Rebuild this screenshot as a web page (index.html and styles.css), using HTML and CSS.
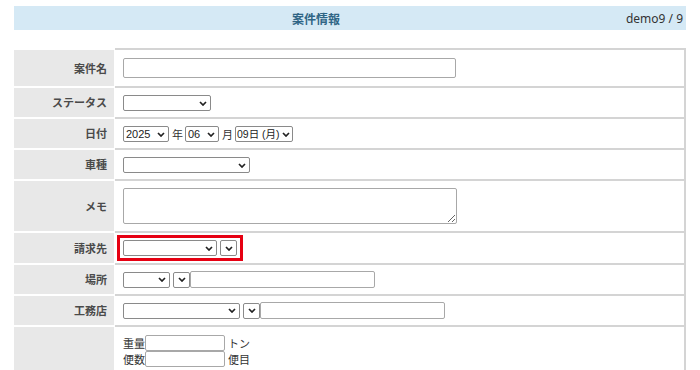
FILE: index.html
```html
<!DOCTYPE html>
<html>
<head>
  <title>案件情報</title>
  <link rel="stylesheet" href="styles.css">
</head>

<body>
  <div class="page">
    <div class="title-bar">
      <p class="title">案件情報</p>
      <p class="user">demo9 / 9</p>
    </div>

    <table class="form-table">
      <tr>
        <td class="label">案件名</td>
        <td class="value tall"><input type="text" class="text-name"></td>
      </tr>
      <tr>
        <td class="label">ステータス</td>
        <td class="value"><select class="sel-status"><option></option></select></td>
      </tr>
      <tr>
        <td class="label">日付</td>
        <td class="value">
          <select class="sel-year"><option>2025</option></select><span class="unit">年</span><select class="sel-month"><option>06</option></select><span class="unit">月</span><select class="sel-day"><option>09日 (月)</option></select>
        </td>
      </tr>
      <tr>
        <td class="label">車種</td>
        <td class="value"><select class="sel-car"><option></option></select></td>
      </tr>
      <tr>
        <td class="label">メモ</td>
        <td class="value memo-cell"><textarea class="memo"></textarea></td>
      </tr>
      <tr>
        <td class="label">請求先</td>
        <td class="value tight">
          <span class="highlight"><select class="sel-bill"><option></option></select><select class="sel-mini"><option></option></select></span>
        </td>
      </tr>
      <tr>
        <td class="label">場所</td>
        <td class="value">
          <select class="sel-place"><option></option></select><select class="sel-mini"><option></option></select><input type="text" class="text-place">
        </td>
      </tr>
      <tr>
        <td class="label">工務店</td>
        <td class="value">
          <select class="sel-builder"><option></option></select><select class="sel-mini"><option></option></select><input type="text" class="text-place">
        </td>
      </tr>
      <tr>
        <td class="label"></td>
        <td class="value last">
          <div class="qty-line">重量<input type="text" class="text-qty">トン</div>
          <div class="qty-line">便数<input type="text" class="text-qty">便目</div>
        </td>
      </tr>
    </table>
  </div>
</body>
</html>
```

FILE: styles.css
```css
body {
  margin: 0;
  padding: 0;
  background-color: #ffffff;
  font-family: 'Noto Sans CJK JP', sans-serif;
  color: #333333;
}

.page {
  padding: 6px 14px;
}

.title-bar {
  display: flex;
  align-items: center;
  height: 24px;
  background-color: #d5e9f5;
}

.title {
  flex: 1;
  margin: 0 8px 0 0;
  text-align: center;
  font-size: 12px;
  font-weight: bold;
  color: #2f6585;
}

.user {
  margin: 0 3px 0 0;
  font-family: 'Noto Sans', sans-serif;
  font-size: 12px;
  color: #333333;
}

.form-table {
  width: 672px;
  margin-top: 18px;
  border-collapse: separate;
  border-spacing: 0;
}

.form-table td {
  font-size: 11px;
  line-height: 15px;
  vertical-align: middle;
}

.label {
  width: 101px;
  padding: 0 7px 0 0;
  box-sizing: border-box;
  text-align: right;
  font-weight: bold;
  color: #4a4a4a;
  background-color: #e8e8e8;
  border-top: 2px solid #ffffff;
  border-right: 1px solid #ffffff;
}

.value {
  height: 31px;
  padding: 0 8px;
  box-sizing: border-box;
  border-top: 2px solid #d4d4d4;
  border-right: 2px solid #d4d4d4;
}

.value.tall {
  height: 38px;
}

.value.memo-cell {
  height: 52px;
}

.value.tight {
  height: 32px;
  padding: 0 2px;
}

.value.last {
  height: 50px;
  padding: 8px 8px 0 8px;
  vertical-align: top;
}

select {
  appearance: none;
  -webkit-appearance: none;
  font-family: 'Liberation Sans', 'Noto Sans CJK JP', sans-serif;
  font-size: 11px;
  height: 16px;
  margin: 0;
  padding: 0 12px 0 2px;
  border: 1px solid #8a8a8a;
  border-radius: 2px;
  background: #ffffff url("data:image/svg+xml,%3Csvg xmlns='http://www.w3.org/2000/svg' viewBox='0 0 8 5'%3E%3Cpath d='M1 1l3 3 3-3' fill='none' stroke='%23222' stroke-width='1.7'/%3E%3C/svg%3E") no-repeat right 3px center / 8px 5px;
  box-sizing: border-box;
  vertical-align: middle;
  color: #222222;
}

input[type="text"] {
  margin: 0;
  padding: 0 3px;
  border: 1px solid #a8a8a8;
  border-radius: 2px;
  box-sizing: border-box;
  vertical-align: middle;
}

.text-name {
  width: 333px;
  height: 20px;
}

.sel-status {
  width: 88px;
}

.sel-year {
  width: 46px;
}

.sel-month {
  width: 34px;
}

.sel-day {
  width: 58px;
  padding: 0 10px 0 1px;
  font-size: 10.5px;
  background-position: right 2px center;
}

.unit {
  margin: 0 2px 0 3px;
  vertical-align: middle;
}

.sel-car {
  width: 127px;
}

.memo {
  width: 334px;
  height: 36px;
  margin: 0;
  padding: 0;
  border: 1px solid #a8a8a8;
  border-radius: 2px;
  box-sizing: border-box;
  display: block;
  resize: vertical;
}

.highlight {
  display: inline-flex;
  align-items: center;
  gap: 3px;
  padding: 2px 3px 2px 3px;
  border: 3px solid #e60012;
}

.sel-bill {
  width: 94px;
}

.sel-mini {
  width: 17px;
  margin-left: 3px;
  padding: 0;
  background-position: center;
}

.highlight .sel-mini {
  margin-left: 0;
}

.sel-place {
  width: 47px;
}

.sel-builder {
  width: 117px;
}

.text-place {
  width: 185px;
  height: 17px;
  margin-left: 3px;
}

.qty-line {
  display: flex;
  align-items: center;
  height: 16px;
  color: #333333;
}

.text-qty {
  width: 80px;
  height: 16px;
  margin-right: 3px !important;
}
```
